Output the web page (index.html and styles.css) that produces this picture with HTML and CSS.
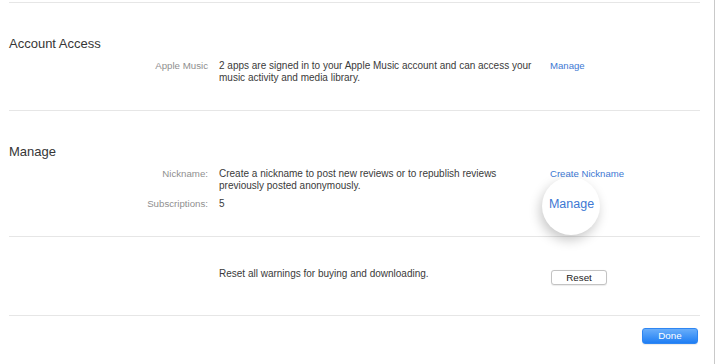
FILE: index.html
```html
<!DOCTYPE html>
<html>
<head>
<meta charset="utf-8">
<link rel="stylesheet" href="styles.css">
</head>
<body>
<div class="window">
  <div class="content">
    <section class="section s1">
      <h2 class="heading">Account Access</h2>
      <div class="row">
        <div class="label">Apple Music</div>
        <div class="text">2 apps are signed in to your Apple Music account and can access your music activity and media library.</div>
        <div class="action"><span class="link">Manage</span></div>
      </div>
    </section>
    <section class="section s2">
      <h2 class="heading">Manage</h2>
      <div class="row">
        <div class="label">Nickname:</div>
        <div class="text">Create a nickname to post new reviews or to republish reviews previously posted anonymously.</div>
        <div class="action"><span class="link">Create Nickname</span></div>
      </div>
      <div class="row row-sub">
        <div class="label">Subscriptions:</div>
        <div class="text">5</div>
        <div class="action">
          <div class="magnifier"><span class="mag-text">Manage</span></div>
        </div>
      </div>
    </section>
    <section class="section s3">
      <div class="row">
        <div class="label"></div>
        <div class="text">Reset all warnings for buying and downloading.</div>
        <div class="action"><button class="btn">Reset</button></div>
      </div>
    </section>
    <section class="section footer">
      <button class="btn btn-primary">Done</button>
    </section>
  </div>
</div>
</body>
</html>
```

FILE: styles.css
```css
html, body {
  margin: 0;
  padding: 0;
  background: #ffffff;
}
body {
  width: 716px;
  height: 364px;
  overflow: hidden;
  font-family: "Liberation Sans", Arial, sans-serif;
  color: #3a3a3a;
}
.window {
  width: 714px;
  height: 364px;
  border-right: 1px solid #c9c9c9;
  box-sizing: content-box;
}
.content {
  padding: 2px 14px 0 9px;
}
.section {
  border-top: 1px solid #e6e6e6;
}
.heading {
  margin: 0;
  font-weight: normal;
  font-size: 13px;
  line-height: 15px;
  color: #363636;
}
.s1 {
  padding: 33px 0 27px;
}
.s1 .heading {
  margin-bottom: 9px;
}
.s2 {
  padding: 33px 0 26px;
}
.s2 .heading {
  margin-bottom: 9px;
}
.s3 {
  padding: 31px 0 30px;
}
.row {
  display: grid;
  grid-template-columns: 199px 318px 1fr;
  column-gap: 11px;
  font-size: 10px;
  line-height: 11.5px;
}
.row > .action {
  margin-left: 2px;
}
.row-sub {
  margin-top: 7px;
}
.label {
  text-align: right;
  color: #8f8f8f;
  font-size: 9.7px;
}
.text {
  color: #3a3a3a;
}
.action {
  position: relative;
  min-height: 11px;
}
.link {
  color: #3d78d3;
  font-size: 9.6px;
}
.magnifier {
  position: absolute;
  left: -8px;
  top: -21px;
  width: 58px;
  height: 58px;
  border-radius: 50%;
  background: #ffffff;
  box-shadow: -2px 5px 12px rgba(0, 0, 0, 0.22);
  display: flex;
  align-items: center;
  justify-content: center;
}
.mag-text {
  color: #3d78d3;
  font-size: 12.5px;
  line-height: 15px;
  margin-top: -3px;
  margin-left: 1px;
}
.btn {
  font-family: "Liberation Sans", Arial, sans-serif;
  font-size: 9.8px;
  line-height: 13px;
  height: 15px;
  width: 56px;
  padding: 0;
  margin: 2px 0 0 1px;
  border: 1px solid #c3c3c3;
  border-radius: 3px;
  background: #ffffff;
  color: #222222;
  box-shadow: 0 0.5px 1px rgba(0, 0, 0, 0.08);
}
.footer {
  display: flex;
  justify-content: flex-end;
  padding: 12px 2px 0 0;
}
.btn-primary {
  margin: 0;
  height: 16px;
  border: 1px solid #2f86f2;
  background: linear-gradient(#69aefa, #1f7ef4);
  color: #ffffff;
}
```
